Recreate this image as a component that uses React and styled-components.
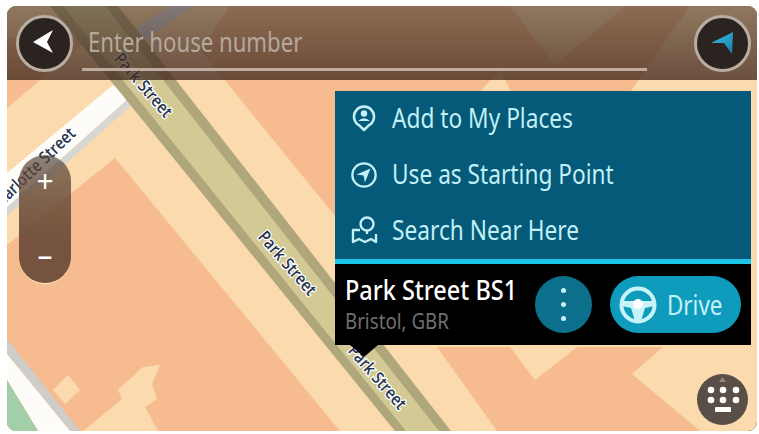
import React from 'react';
import styled, { createGlobalStyle } from 'styled-components';

const Global = createGlobalStyle`
  html, body { margin: 0; padding: 0; background: #fff; }
  body { font-family: "Noto Sans", "Liberation Sans", sans-serif; }
`;

const Screen = styled.div`
  position: relative;
  width: 750px;
  height: 425px;
  margin: 6px 0 0 7px;
  border-radius: 9px;
  overflow: hidden;
  background: #000;
  display: flex;
  flex-direction: column;
`;

const MapCanvas = styled.svg`
  position: absolute;
  inset: 0;
  width: 100%;
  height: 100%;
`;

const StreetLabel = styled.text`
  font-family: "Open Sans", "Noto Sans", sans-serif;
  font-size: 17px;
  font-weight: 600;
  fill: #26344f;
  stroke: #fff;
  stroke-width: 2.5px;
  paint-order: stroke;
  text-anchor: middle;
`;

const Header = styled.header`
  position: relative;
  height: 74px;
  flex: none;
  box-sizing: border-box;
  padding: 9px 6px 0 9px;
  display: flex;
  align-items: flex-start;
  background: linear-gradient(180deg, rgba(78, 58, 46, 0.62), rgba(66, 42, 30, 0.78));
`;

const RoundButton = styled.button`
  width: 57px;
  height: 57px;
  flex: none;
  box-sizing: border-box;
  padding: 0;
  border-radius: 50%;
  border: 3px solid #b9ada2;
  background: #2a2320;
  display: flex;
  align-items: center;
  justify-content: center;
`;

const InputField = styled.div`
  flex: 1;
  min-width: 0;
  margin: 0 47px 0 9px;
  height: 56px;
  box-sizing: border-box;
  padding: 8px 0 0 6px;
  border-bottom: 3px solid #bfaca0;
  color: #b5a89d;
  font-size: 27px;
  line-height: 38px;
  white-space: nowrap;
`;

const Condensed = styled.span`
  display: inline-block;
  transform: scaleX(${p => p.$sx || 0.88});
  transform-origin: left center;
  white-space: nowrap;
`;

const Body = styled.main`
  position: relative;
  flex: 1;
  box-sizing: border-box;
  padding: 11px 6px 6px 12px;
  display: flex;
  justify-content: space-between;
`;

const ZoomControl = styled.div`
  width: 52px;
  height: 128px;
  margin-top: 64px;
  box-sizing: border-box;
  border-radius: 26px;
  padding: 8px 0 10px;
  display: flex;
  flex-direction: column;
  align-items: center;
  justify-content: space-between;
  color: #fff;
  font-size: 30px;
  line-height: 36px;
  background: linear-gradient(180deg, rgba(84, 66, 54, 0.66) 0%, rgba(110, 80, 60, 0.9) 45%, #75533e 70%);
  box-shadow: 0 1px 0 #fbe6cc;
`;

const RightColumn = styled.div`
  display: flex;
  flex-direction: column;
  align-items: flex-end;
  width: 416px;
`;

const Panel = styled.section`
  width: 416px;
  background: #045a78;
  position: relative;
`;

const MenuRow = styled.div`
  height: 56px;
  display: flex;
  align-items: center;
  padding-left: 15px;
  gap: 14px;
  color: #c3eff6;
  font-size: 28px;
  line-height: 52px;
  padding-bottom: 4px;
  box-sizing: border-box;
`;

const IconSlot = styled.span`
  width: 28px;
  height: 32px;
  display: flex;
  align-items: center;
  justify-content: center;
  flex: none;
  margin-top: 4px;
`;

const Footer = styled.div`
  height: 86px;
  box-sizing: border-box;
  border-top: 5px solid #1cc6e6;
  background: #000;
  padding: 0 10px;
  display: flex;
  align-items: center;
  position: relative;
  &::after {
    content: '';
    position: absolute;
    left: 15px;
    bottom: -12px;
    border-left: 14px solid transparent;
    border-right: 14px solid transparent;
    border-top: 12px solid #000;
  }
`;

const Place = styled.div`
  flex: 1;
  min-width: 0;
  display: flex;
  flex-direction: column;
`;

const PlaceName = styled.div`
  color: #fff;
  font-size: 27px;
  line-height: 32px;
  font-weight: 500;
  margin-bottom: 2px;
`;

const PlaceSub = styled.div`
  color: #6f6f6f;
  font-size: 21px;
  line-height: 27px;
`;

const MoreButton = styled.button`
  width: 57px;
  height: 57px;
  flex: none;
  padding: 0;
  border: 0;
  border-radius: 50%;
  background: #0c6f8b;
  display: flex;
  flex-direction: column;
  align-items: center;
  justify-content: center;
  gap: 9px;
  margin-right: 18px;
`;

const Dot = styled.i`
  width: 5px;
  height: 5px;
  border-radius: 50%;
  background: #c9f0f6;
`;

const DriveButton = styled.button`
  width: 131px;
  height: 57px;
  flex: none;
  box-sizing: border-box;
  padding: 0 0 0 8px;
  border: 0;
  border-radius: 29px;
  background: #0f9cbc;
  color: #c5f2fa;
  font-family: inherit;
  font-size: 27px;
  display: flex;
  align-items: center;
  gap: 9px;
`;

const KeyboardButton = styled.button`
  width: 51px;
  height: 51px;
  padding: 0;
  border: 0;
  border-radius: 50%;
  background: #5a4f47;
  margin: auto 3px 0 0;
  display: flex;
  align-items: center;
  justify-content: center;
`;

const iconStroke = '#c3eff6';

function App() {
  return (
    <>
      <Global />
      <Screen>
        <MapCanvas viewBox="7 6 750 425" preserveAspectRatio="none">
          <rect x="7" y="6" width="750" height="425" fill="#fbdaae" />
          <polygon points="7,108 90,38 7,38" fill="#f7bc92" />
          <polygon points="115,158 340,431 7,431 7,245" fill="#f6bc90" />
          <polygon points="200,50 230,6 510,6 555,65 625,6 690,6 628,95 513,95 500,70 477,95 340,95 340,222" fill="#f6bc90" />
          <polygon points="437,347 510,347 535,380 577,347 663,347 632,374 700,431 497,431" fill="#f6bc90" />
          <polygon points="7,207 130,97 134,103 7,216" fill="#d8d6d2" />
          <polygon points="7,173 113,85 130,97 7,207" fill="#fdfcf8" />
          <polygon points="118,40 170,6 192,6 125,55" fill="#d2dcec" />
          <polygon points="50,6 395,431 451,431 118,6" fill="#b0a67b" />
          <polygon points="63,6 406,431 439,431 105,6" fill="#d2c994" />
          <polygon points="160,365 143,367 118,390 122,399 83,431 158,431 145,407 157,399 152,384" fill="#fbdaae" />
          <polygon points="68,375 80,390 65,404 53,390" fill="#fbdaae" />
          <polygon points="7,339 80,431 70,431 7,354" fill="#cfcdc9" />
          <polygon points="7,354 70,431 38,431 7,380" fill="#fdfcf8" />
          <polygon points="7,380 38,431 7,431" fill="#a3cfa8" />
          <StreetLabel transform="translate(139 89) rotate(49) scale(0.86 1)">Park Street</StreetLabel>
          <StreetLabel transform="translate(283 267) rotate(49) scale(0.86 1)">Park Street</StreetLabel>
          <StreetLabel transform="translate(373 381) rotate(49) scale(0.86 1)">Park Street</StreetLabel>
          <StreetLabel transform="translate(36 174) rotate(-44) scale(0.86 1)">Charlotte Street</StreetLabel>
        </MapCanvas>

        <Header>
          <RoundButton aria-label="Back">
            <svg width="30" height="30" viewBox="0 0 30 30">
              <polygon points="3,13 23,1 17,13 23,24" fill="#fff" />
            </svg>
          </RoundButton>
          <InputField><Condensed $sx={0.82}>Enter house number</Condensed></InputField>
          <RoundButton aria-label="Location">
            <svg width="30" height="30" viewBox="0 0 30 30">
              <defs>
                <linearGradient id="nav" x1="0" y1="0" x2="1" y2="1">
                  <stop offset="0" stopColor="#38bde8" />
                  <stop offset="1" stopColor="#1a7fa8" />
                </linearGradient>
              </defs>
              <polygon points="25,3 3,14 16,14 24,25" fill="url(#nav)" />
            </svg>
          </RoundButton>
        </Header>

        <Body>
          <ZoomControl>
            <span>+</span>
            <span>–</span>
          </ZoomControl>
          <RightColumn>
            <Panel>
              <MenuRow>
                <IconSlot>
                  <svg width="26" height="30" viewBox="0 0 26 30" fill="none" stroke={iconStroke} strokeWidth="2.6">
                    <path d="M13 26 L8.5 21.6 A10 10 0 1 1 17.5 21.6 Z" strokeLinejoin="round" />
                    <circle cx="13" cy="9.5" r="3.2" fill={iconStroke} stroke="none" />
                    <path d="M7 17 Q13 11.5 19 17" fill={iconStroke} stroke="none" />
                  </svg>
                </IconSlot>
                <Condensed $sx={0.81}>Add to My Places</Condensed>
              </MenuRow>
              <MenuRow>
                <IconSlot>
                  <svg width="30" height="30" viewBox="0 0 30 30" fill="none" stroke={iconStroke} strokeWidth="2.4">
                    <circle cx="15" cy="15" r="12.5" />
                    <polygon points="22,8 7,14.5 14.5,15.5 16,23" fill={iconStroke} stroke="none" />
                  </svg>
                </IconSlot>
                <Condensed $sx={0.81}>Use as Starting Point</Condensed>
              </MenuRow>
              <MenuRow>
                <IconSlot>
                  <svg width="28" height="30" viewBox="0 0 28 30" fill="none" stroke={iconStroke} strokeWidth="2.4" strokeLinejoin="round">
                    <circle cx="17" cy="8" r="6.5" />
                    <path d="M17 14.5 L17 18" />
                    <path d="M10 14 L3 14 L3 26 L9 23 L15 26 L21 23 L26 26 L26 18" />
                  </svg>
                </IconSlot>
                <Condensed $sx={0.81}>Search Near Here</Condensed>
              </MenuRow>
              <Footer>
                <Place>
                  <PlaceName><Condensed $sx={0.87}>Park Street BS1</Condensed></PlaceName>
                  <PlaceSub><Condensed $sx={0.89}>Bristol, GBR</Condensed></PlaceSub>
                </Place>
                <MoreButton aria-label="More"><Dot /><Dot /><Dot /></MoreButton>
                <DriveButton>
                  <svg width="40" height="40" viewBox="0 0 40 40" fill="none">
                    <circle cx="20" cy="20" r="16.5" stroke="#c9f3fa" strokeWidth="4" />
                    <polygon points="4,16 16,16 20,19 24,16 36,16 36,21 27,23 23,36 17,36 13,23 4,21" fill="#c9f3fa" />
                    <circle cx="20" cy="19" r="5" fill="#fff" />
                  </svg>
                  <Condensed $sx={0.83}>Drive</Condensed>
                </DriveButton>
              </Footer>
            </Panel>
            <KeyboardButton aria-label="Keyboard">
              <svg width="51" height="51" viewBox="0 0 51 51">
                <polygon points="25.5,3 29,8 22,8" fill="#8f857c" />
                {[14, 26, 39].flatMap(x => [16, 26].map(y => (
                  <circle key={`${x}-${y}`} cx={x} cy={y} r="3.3" fill="#fff" />
                )))}
                <rect x="18" y="33" width="16" height="5" rx="1" fill="#fff" />
              </svg>
            </KeyboardButton>
          </RightColumn>
        </Body>
      </Screen>
    </>
  );
}

export default App;
